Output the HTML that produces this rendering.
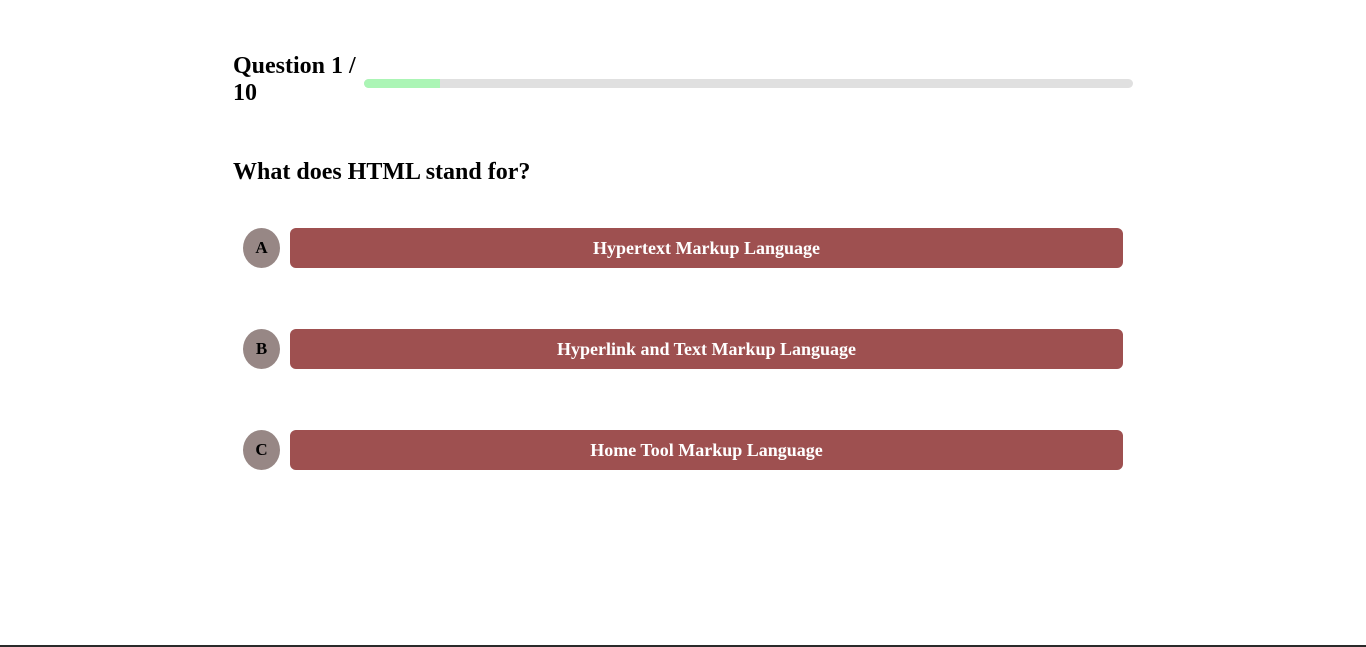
<!DOCTYPE html>
<html><head><style>
body{margin:0;width:1366px;height:647px;background:#fff;font-family:"Liberation Serif",serif;position:relative;overflow:hidden}
.q{position:absolute;left:233px;top:53px;font-size:24px;font-weight:bold;line-height:27px;width:130px}
.bar{position:absolute;left:364px;top:79px;width:769px;height:9px;background:#e0e0e0;border-radius:5px;overflow:hidden}
.bar div{width:76px;height:100%;background:#abf5b5}
.h{position:absolute;left:233px;top:159px;font-size:24px;font-weight:bold;margin:0}
.c{position:absolute;left:243px;width:37px;height:40px;border-radius:50%;background:#978785;font-weight:bold;font-size:17px;display:flex;align-items:center;justify-content:center}
.b{position:absolute;left:290px;width:833px;height:40px;border-radius:6px;background:#9e5050;color:#fff;font-weight:bold;font-size:18px;display:flex;align-items:center;justify-content:center}
.f{position:absolute;left:0;top:645px;width:1366px;height:2px;background:#2a2a2a}
</style></head><body>
<div class="q">Question 1 / 10</div>
<div class="bar"><div></div></div>
<div class="h">What does HTML stand for?</div>
<div class="c" style="top:228px">A</div><div class="b" style="top:228px">Hypertext Markup Language</div>
<div class="c" style="top:329px">B</div><div class="b" style="top:329px">Hyperlink and Text Markup Language</div>
<div class="c" style="top:430px">C</div><div class="b" style="top:430px">Home Tool Markup Language</div>
<div class="f"></div>
</body></html>
